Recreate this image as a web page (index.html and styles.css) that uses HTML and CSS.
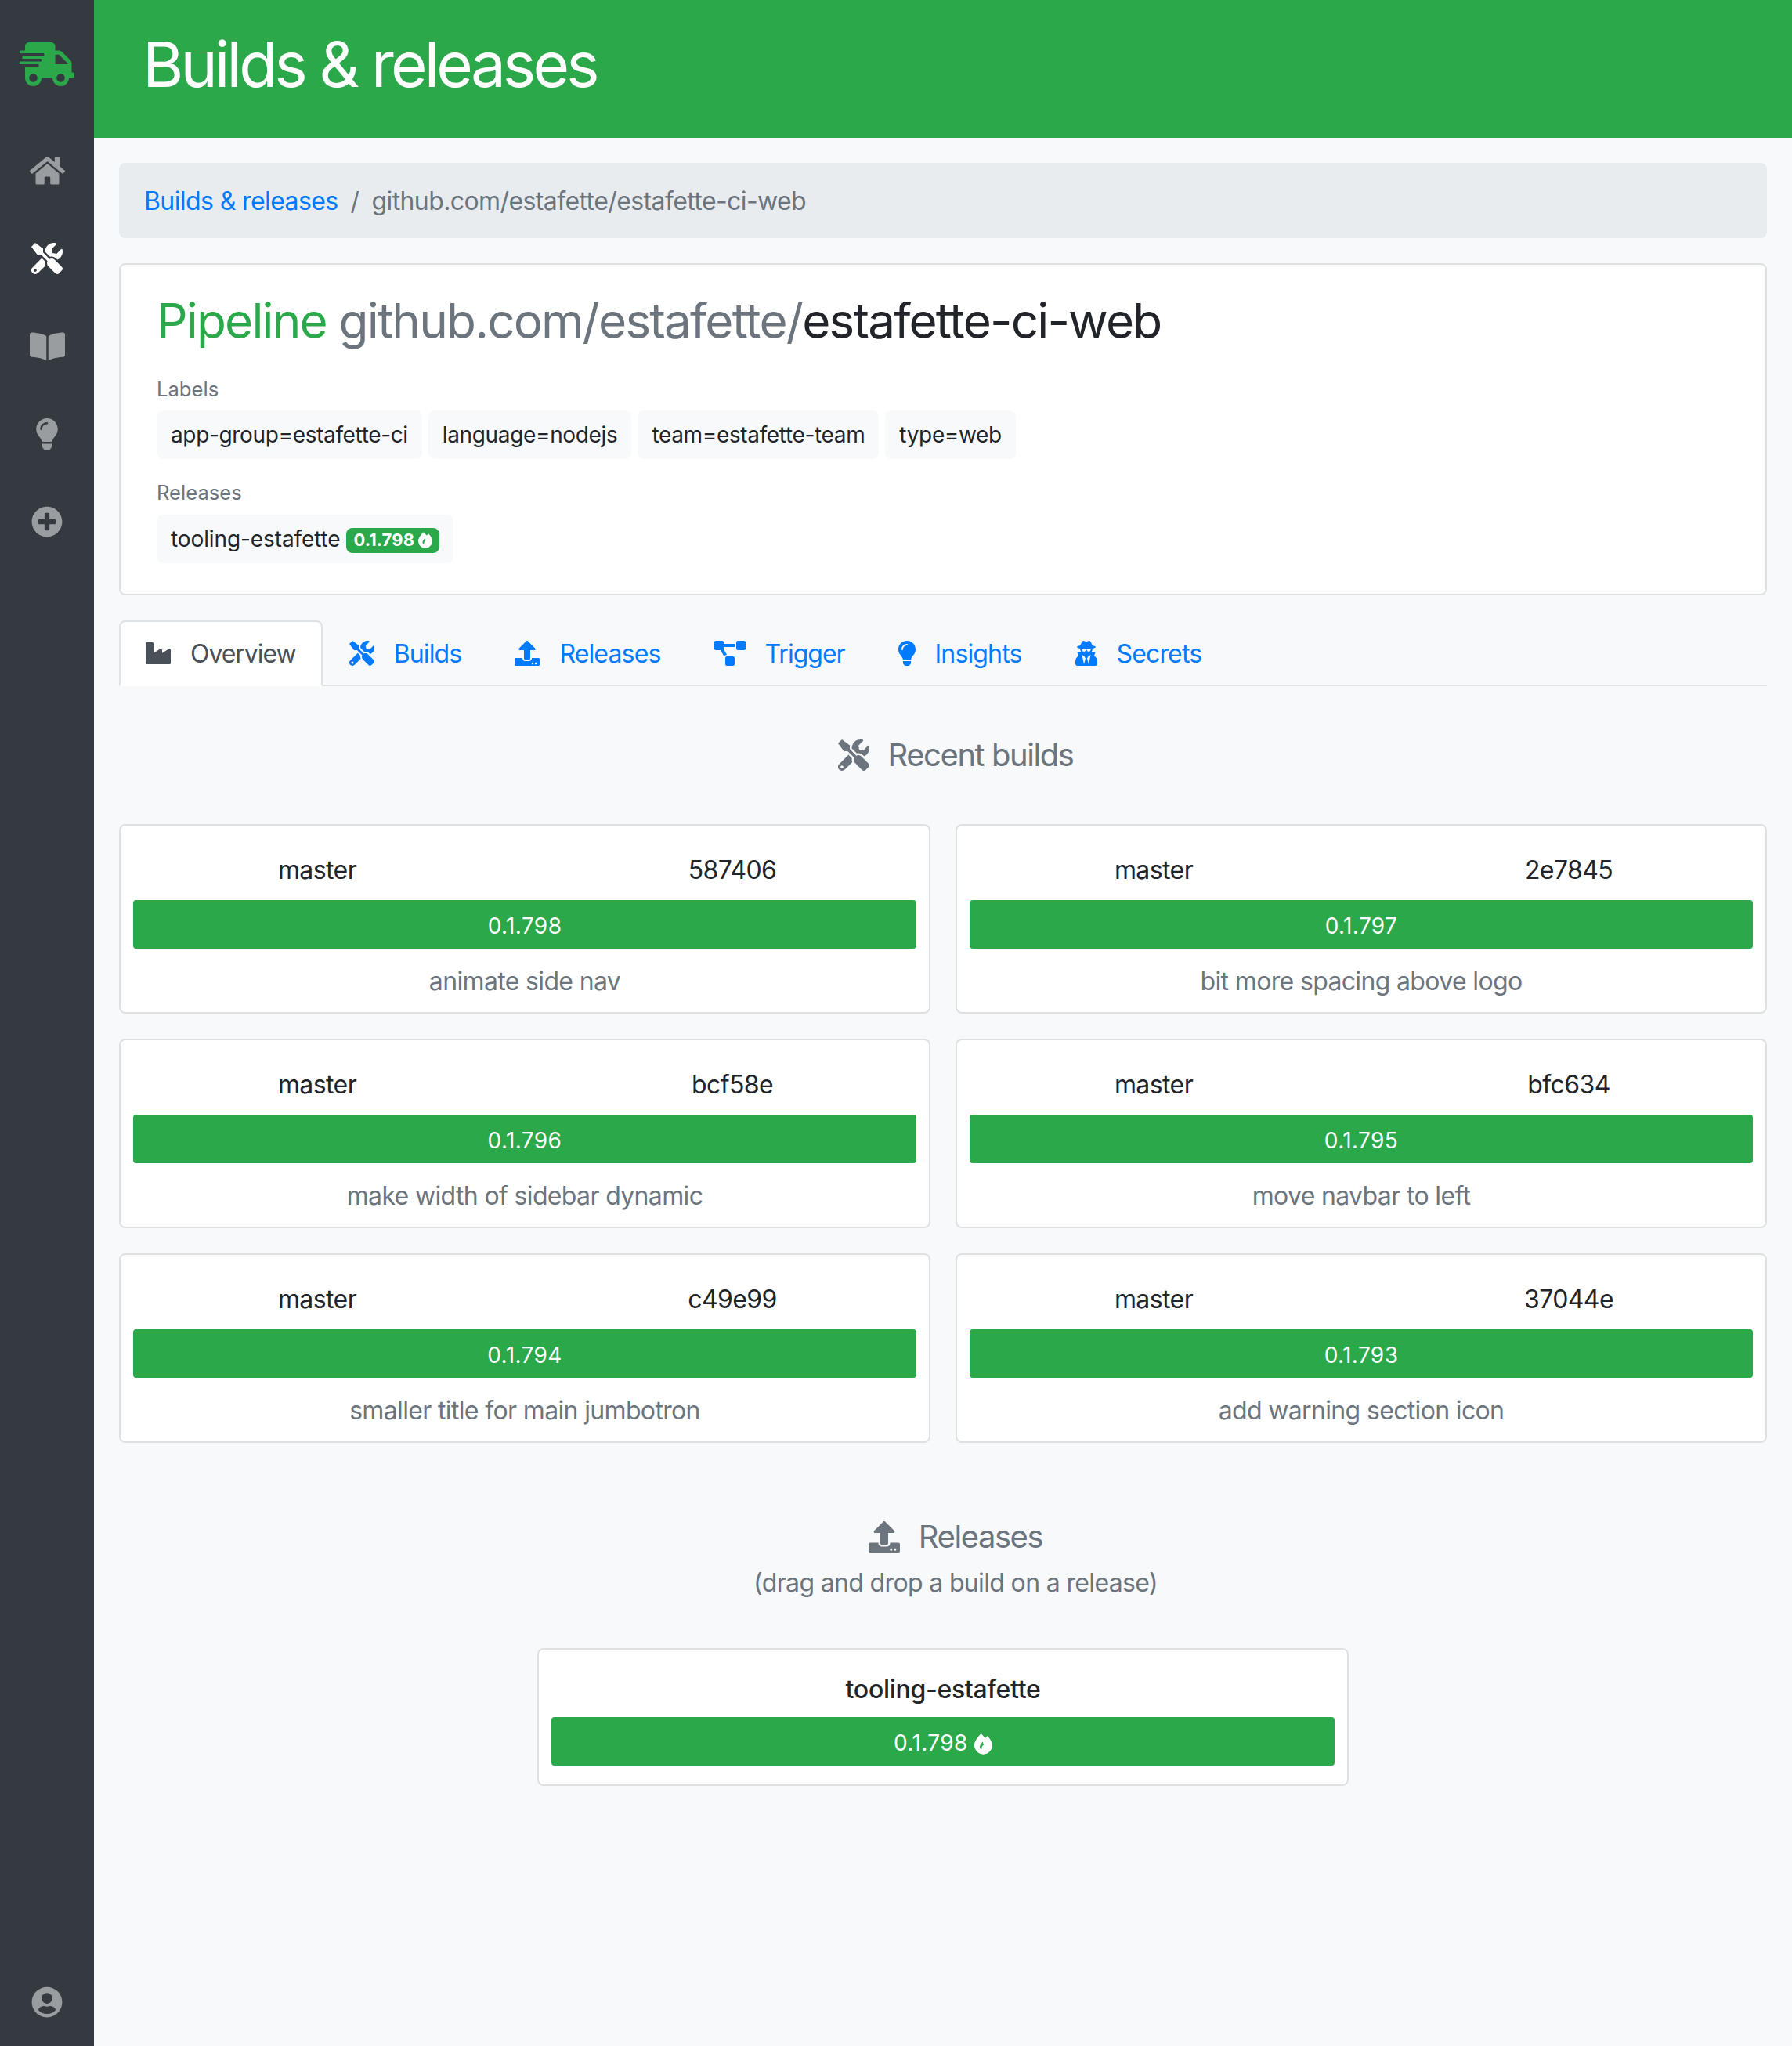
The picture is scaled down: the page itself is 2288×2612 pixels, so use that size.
FILE: index.html
```html
<!DOCTYPE html>
<html lang="en">
<head>
<meta charset="utf-8">
<title>Builds &amp; releases</title>
<link rel="stylesheet" href="styles.css">
</head>
<body>
<svg class="defs" aria-hidden="true">
  <symbol id="i-truck" viewBox="0 0 640 512"><path d="M624 352h-16V243.9c0-12.7-5.1-24.9-14.1-33.9L494 110.1c-9-9-21.2-14.1-33.9-14.1H416V48c0-26.5-21.5-48-48-48H112C85.5 0 64 21.5 64 48v48H8c-4.4 0-8 3.6-8 8v16c0 4.4 3.6 8 8 8h272c4.4 0 8 3.6 8 8v16c0 4.4-3.6 8-8 8H40c-4.4 0-8 3.6-8 8v16c0 4.4 3.6 8 8 8h208c4.4 0 8 3.6 8 8v16c0 4.4-3.6 8-8 8H8c-4.4 0-8 3.6-8 8v16c0 4.4 3.6 8 8 8h208c4.4 0 8 3.6 8 8v16c0 4.4-3.6 8-8 8H64v128c0 53 43 96 96 96s96-43 96-96h128c0 53 43 96 96 96s96-43 96-96h48c8.8 0 16-7.2 16-16v-32c0-8.8-7.2-16-16-16zM160 464c-26.5 0-48-21.5-48-48s21.5-48 48-48 48 21.5 48 48-21.5 48-48 48zm320 0c-26.5 0-48-21.5-48-48s21.5-48 48-48 48 21.5 48 48-21.5 48-48 48zm80-208H416V144h44.1l99.9 99.9V256z"/></symbol>
  <symbol id="i-home" viewBox="0 0 576 512"><path d="M280.37 148.26L96 300.11V464a16 16 0 0 0 16 16l112.06-.29a16 16 0 0 0 15.92-16V368a16 16 0 0 1 16-16h64a16 16 0 0 1 16 16v95.64a16 16 0 0 0 16 16.05L464 480a16 16 0 0 0 16-16V300L295.67 148.26a12.19 12.19 0 0 0-15.3 0zM571.6 251.47L488 182.56V44.05a12 12 0 0 0-12-12h-56a12 12 0 0 0-12 12v72.61L318.47 43a48 48 0 0 0-61 0L4.34 251.47a12 12 0 0 0-1.6 16.9l25.5 31A12 12 0 0 0 45.15 301l235.22-193.74a12.19 12.19 0 0 1 15.3 0L530.9 301a12 12 0 0 0 16.9-1.6l25.5-31a12 12 0 0 0-1.7-16.93z"/></symbol>
  <symbol id="i-tools" viewBox="0 0 512 512"><path d="M501.1 395.7L384 278.6c-23.1-23.1-57.6-27.6-85.4-13.9L192 158.1V96L64 0 0 64l96 128h62.1l106.6 106.6c-13.6 27.8-9.2 62.3 13.9 85.4l117.1 117.1c14.6 14.6 38.2 14.6 52.7 0l52.7-52.7c14.5-14.6 14.5-38.2 0-52.7zM331.7 225c28.3 0 54.9 11 74.9 31l19.4 19.4c15.8-6.9 30.8-16.5 43.8-29.5 37.1-37.1 49.7-89.3 37.9-136.7-2.2-9-13.5-12.1-20.1-5.5l-74.4 74.4-67.9-11.3L334 98.9l74.4-74.4c6.6-6.6 3.4-17.9-5.7-20.2-47.4-11.7-99.6.9-136.6 37.9-28.5 28.5-41.9 66.1-41.2 103.6l82.1 82.1c8.1-1.9 16.5-2.9 24.7-2.9zm-103.9 82l-56.7-56.7L18.7 402.8c-25 25-25 65.5 0 90.5s65.5 25 90.5 0l123.6-123.6c-7.6-19.9-9.9-41.6-5-62.7zM64 472c-13.2 0-24-10.8-24-24 0-13.3 10.7-24 24-24s24 10.7 24 24c0 13.2-10.7 24-24 24z"/></symbol>
  <symbol id="i-book" viewBox="0 0 576 512"><path d="M542.22 32.05c-54.8 3.11-163.72 14.43-230.96 55.59-4.64 2.84-7.27 7.89-7.27 13.17v363.87c0 11.55 12.63 18.85 23.28 13.49 69.18-34.82 169.23-44.32 218.7-46.92 16.89-.89 30.02-14.43 30.02-30.66V62.75c.01-17.71-15.35-31.74-33.77-30.7zM264.73 87.64C197.5 46.48 88.58 35.17 33.78 32.05 15.36 31.01 0 45.04 0 62.75V400.6c0 16.24 13.13 29.78 30.02 30.66 49.49 2.6 149.59 12.11 218.77 46.95 10.62 5.35 23.21-1.94 23.21-13.46V100.63c0-5.29-2.62-10.14-7.27-12.99z"/></symbol>
  <symbol id="i-bulb" viewBox="0 0 352 512"><path d="M96.06 454.35c.01 6.29 1.87 12.45 5.36 17.69l17.09 25.69a31.99 31.99 0 0 0 26.64 14.28h61.71a31.99 31.99 0 0 0 26.64-14.28l17.09-25.69a31.989 31.989 0 0 0 5.36-17.69l.04-38.35H96.01l.05 38.35zM0 176c0 44.37 16.45 84.85 43.56 115.78 16.52 18.85 42.36 58.23 52.21 91.45.04.26.07.52.11.78h160.24c.04-.26.07-.51.11-.78 9.85-33.22 35.69-72.6 52.21-91.45C335.55 260.85 352 220.37 352 176 352 78.61 272.91-.3 175.45 0 73.44.31 0 82.97 0 176zm176-80c-44.11 0-80 35.89-80 80 0 8.84-7.16 16-16 16s-16-7.16-16-16c0-61.76 50.24-112 112-112 8.84 0 16 7.16 16 16s-7.16 16-16 16z"/></symbol>
  <symbol id="i-plus" viewBox="0 0 512 512"><path d="M256 8C119 8 8 119 8 256s111 248 248 248 248-111 248-248S393 8 256 8zm144 276c0 6.6-5.4 12-12 12h-92v92c0 6.6-5.4 12-12 12h-56c-6.6 0-12-5.4-12-12v-92h-92c-6.6 0-12-5.4-12-12v-56c0-6.6 5.4-12 12-12h92v-92c0-6.6 5.4-12 12-12h56c6.6 0 12 5.4 12 12v92h92c6.6 0 12 5.4 12 12v56z"/></symbol>
  <symbol id="i-user" viewBox="0 0 496 512"><path d="M248 8C111 8 0 119 0 256s111 248 248 248 248-111 248-248S385 8 248 8zm0 96c48.6 0 88 39.4 88 88s-39.4 88-88 88-88-39.4-88-88 39.4-88 88-88zm0 344c-58.7 0-111.3-26.6-146.5-68.2 18.8-35.4 55.6-59.8 98.5-59.8 2.4 0 4.8.4 7.1 1.1 13 4.2 26.6 6.9 40.9 6.9 14.3 0 28-2.7 40.9-6.9 2.3-.7 4.7-1.1 7.1-1.1 42.9 0 79.7 24.4 98.5 59.8C359.3 421.4 306.7 448 248 448z"/></symbol>
  <symbol id="i-industry" viewBox="0 0 512 512"><path d="M475.115 163.781L336 252.309v-68.28c0-18.916-20.931-30.399-36.885-20.248L160 252.309V56c0-13.255-10.745-24-24-24H24C10.745 32 0 42.745 0 56v400c0 13.255 10.745 24 24 24h464c13.255 0 24-10.745 24-24V184.029c0-18.917-20.931-30.399-36.885-20.248z"/></symbol>
  <symbol id="i-upload" viewBox="0 0 512 512"><path d="M296 384h-80c-13.3 0-24-10.7-24-24V192h-87.7c-17.8 0-26.7-21.5-14.1-34.1L242.3 5.7c7.5-7.5 19.8-7.5 27.3 0l152.2 152.2c12.6 12.6 3.7 34.1-14.1 34.1H320v168c0 13.3-10.7 24-24 24zm216-8v112c0 13.3-10.7 24-24 24H24c-13.3 0-24-10.7-24-24V376c0-13.3 10.7-24 24-24h136v8c0 30.9 25.1 56 56 56h80c30.9 0 56-25.1 56-56v-8h136c13.3 0 24 10.7 24 24zm-124 88c0-11-9-20-20-20s-20 9-20 20 9 20 20 20 20-9 20-20zm64 0c0-11-9-20-20-20s-20 9-20 20 9 20 20 20 20-9 20-20z"/></symbol>
  <symbol id="i-diagram" viewBox="0 0 640 512"><path d="M384 320H256c-17.67 0-32 14.33-32 32v128c0 17.67 14.33 32 32 32h128c17.67 0 32-14.33 32-32V352c0-17.67-14.33-32-32-32zM192 32c0-17.67-14.33-32-32-32H32C14.33 0 0 14.33 0 32v128c0 17.67 14.33 32 32 32h95.72l73.16 128.04C211.98 300.98 232.4 288 256 288h.28L192 175.51V128h224V64H192V32zM608 0H480c-17.67 0-32 14.33-32 32v128c0 17.67 14.33 32 32 32h128c17.67 0 32-14.33 32-32V32c0-17.67-14.33-32-32-32z"/></symbol>
  <symbol id="i-secret" viewBox="0 0 448 512"><path d="M383.9 308.3l23.9-62.6c4-10.5-3.7-21.7-15-21.7h-58.5c11-18.9 17.8-40.6 17.8-64v-.3c39.2-7.8 64-19.1 64-31.7 0-13.3-27.3-25.1-70.1-33-9.2-32.8-27-65.8-40.6-82.8-9.5-11.9-25.9-15.6-39.5-8.8l-27.6 13.8c-9 4.5-19.6 4.5-28.6 0L182.1 3.4c-13.6-6.8-30-3.1-39.5 8.8-13.5 17-31.4 50-40.6 82.8-42.7 7.9-70 19.7-70 33 0 12.6 24.8 23.9 64 31.7v.3c0 23.4 6.8 45.1 17.8 64H56.3c-11.5 0-19.2 11.7-14.7 22.3l25.8 60.2C27.3 329.8 0 372.7 0 422.4v44.8C0 491.9 20.1 512 44.8 512h358.4c24.7 0 44.8-20.1 44.8-44.8v-44.8c0-48.4-25.8-90.4-64.1-114.1zM176 480l-41.6-192 49.6 32 24 40-32 120zm96 0l-32-120 24-40 49.6-32L272 480zm41.7-298.5c-3.9 11.9-7 24.6-16.5 33.4-10.1 9.3-48 22.4-64-25-2.8-8.4-15.4-8.4-18.3 0-17 50.2-56 32.4-64 25-9.5-8.8-12.7-21.5-16.5-33.4-.8-2.5-6.3-5.7-6.3-5.8v-10.8c28.3 3.6 61 5.8 96 5.8s67.7-2.1 96-5.8v10.8c-.1.1-5.6 3.2-6.4 5.8z"/></symbol>
  <symbol id="i-fire" viewBox="0 0 448 512"><path fill-rule="evenodd" d="M323.56 51.2c-20.8 19.3-39.58 39.59-56.22 59.97C240.08 73.62 206.28 35.53 168 0 69.74 91.17 0 209.96 0 281.6 0 408.85 100.29 512 224 512s224-103.15 224-230.4c0-53.27-51.98-163.14-124.44-230.4zM205 195C178 250 135 285 135 330C135 365 160 385 185 380C172 345 192 305 235 270C222 245 212 220 205 195z"/></symbol>
</svg>

<div class="app">
  <nav class="sidebar">
    <a class="logo" href="#"><svg class="ic-logo"><use href="#i-truck"/></svg></a>
    <a class="side-item" href="#"><svg class="ic-side-wide"><use href="#i-home"/></svg></a>
    <a class="side-item active" href="#"><svg class="ic-side"><use href="#i-tools"/></svg></a>
    <a class="side-item" href="#"><svg class="ic-side-wide"><use href="#i-book"/></svg></a>
    <a class="side-item" href="#"><svg class="ic-side-bulb"><use href="#i-bulb"/></svg></a>
    <a class="side-item" href="#"><svg class="ic-side"><use href="#i-plus"/></svg></a>
    <a class="side-item side-bottom" href="#"><svg class="ic-side"><use href="#i-user"/></svg></a>
  </nav>

  <div class="page">
    <header class="topbar"><h1 class="page-title">Builds &amp; releases</h1></header>

    <main class="content">
      <ol class="breadcrumb">
        <li><a href="#">Builds &amp; releases</a></li>
        <li class="crumb-sep">/</li>
        <li class="crumb-current">github.com/estafette/estafette-ci-web</li>
      </ol>

      <section class="pipeline-card">
        <h2 class="pipeline-title"><span class="t-green">Pipeline</span> <span class="t-gray">github.com/estafette/</span>estafette-ci-web</h2>
        <div class="field-label">Labels</div>
        <div class="chips">
          <span class="chip">app-group=estafette-ci</span>
          <span class="chip">language=nodejs</span>
          <span class="chip">team=estafette-team</span>
          <span class="chip">type=web</span>
        </div>
        <div class="field-label field-label-next">Releases</div>
        <div class="chips">
          <span class="chip chip-release">tooling-estafette <span class="badge">0.1.798 <svg class="ic-badge"><use href="#i-fire"/></svg></span></span>
        </div>
      </section>

      <ul class="tabs">
        <li><a class="tab tab-active" href="#"><svg class="ic-tab"><use href="#i-industry"/></svg><span class="tab-label">Overview</span></a></li>
        <li><a class="tab" href="#"><svg class="ic-tab"><use href="#i-tools"/></svg><span class="tab-label">Builds</span></a></li>
        <li><a class="tab" href="#"><svg class="ic-tab"><use href="#i-upload"/></svg><span class="tab-label">Releases</span></a></li>
        <li><a class="tab tab-tight" href="#"><svg class="ic-tab-wide"><use href="#i-diagram"/></svg><span class="tab-label">Trigger</span></a></li>
        <li><a class="tab" href="#"><svg class="ic-tab-bulb"><use href="#i-bulb"/></svg><span class="tab-label">Insights</span></a></li>
        <li><a class="tab" href="#"><svg class="ic-tab-secret"><use href="#i-secret"/></svg><span class="tab-label">Secrets</span></a></li>
      </ul>

      <h3 class="section-title section-builds"><svg class="ic-section"><use href="#i-tools"/></svg>Recent builds</h3>

      <div class="build-grid">
        <article class="build-card">
          <div class="build-meta"><span>master</span><span>587406</span></div>
          <div class="bar">0.1.798</div>
          <div class="build-msg">animate side nav</div>
        </article>
        <article class="build-card">
          <div class="build-meta"><span>master</span><span>2e7845</span></div>
          <div class="bar">0.1.797</div>
          <div class="build-msg">bit more spacing above logo</div>
        </article>
        <article class="build-card">
          <div class="build-meta"><span>master</span><span>bcf58e</span></div>
          <div class="bar">0.1.796</div>
          <div class="build-msg">make width of sidebar dynamic</div>
        </article>
        <article class="build-card">
          <div class="build-meta"><span>master</span><span>bfc634</span></div>
          <div class="bar">0.1.795</div>
          <div class="build-msg">move navbar to left</div>
        </article>
        <article class="build-card">
          <div class="build-meta"><span>master</span><span>c49e99</span></div>
          <div class="bar">0.1.794</div>
          <div class="build-msg">smaller title for main jumbotron</div>
        </article>
        <article class="build-card">
          <div class="build-meta"><span>master</span><span>37044e</span></div>
          <div class="bar">0.1.793</div>
          <div class="build-msg">add warning section icon</div>
        </article>
      </div>

      <h3 class="section-title section-releases"><svg class="ic-section"><use href="#i-upload"/></svg>Releases</h3>
      <p class="section-sub">(drag and drop a build on a release)</p>

      <article class="release-card">
        <div class="release-name">tooling-estafette</div>
        <div class="bar">0.1.798 <svg class="ic-bar"><use href="#i-fire"/></svg></div>
      </article>
    </main>
  </div>
</div>
</body>
</html>
```
FILE: styles.css
```css
* { box-sizing: border-box; }
html, body { margin: 0; padding: 0; }
body {
  font-family: Inter, "Liberation Sans", sans-serif;
  font-size: 32px;
  line-height: 48px;
  letter-spacing: -0.6px;
  color: #212529;
  background: #f8f9fa;
}
a { text-decoration: none; color: #007bff; }
svg { fill: currentColor; display: inline-block; flex: none; }
.defs { display: none; }

.app { display: flex; min-height: 100vh; }

.sidebar {
  width: 120px;
  flex: none;
  background: #343a40;
  display: flex;
  flex-direction: column;
  align-items: stretch;
}
.logo { height: 162px; display: flex; align-items: center; justify-content: center; color: #2ba84a; padding-top: 2px; }
.ic-logo { width: 70px; height: 56px; }
.side-item { height: 112px; display: flex; align-items: center; justify-content: center; color: rgba(255, 255, 255, .5); }
.side-item.active { color: #fff; }
.side-bottom { margin-top: auto; }
.ic-side { width: 40px; height: 40px; }
.ic-side-wide { width: 45px; height: 40px; }
.ic-side-bulb { width: 28px; height: 40px; }

.page { flex: 1; min-width: 0; display: flex; flex-direction: column; }
.topbar { height: 176px; background: #2ba84a; color: #fff; display: flex; align-items: center; padding: 0 62px 12px; }
.page-title { margin: 0; font-size: 80px; font-weight: 400; line-height: 96px; letter-spacing: -3.8px; }

.content { padding: 32px; flex: 1; }

.breadcrumb {
  list-style: none;
  margin: 0 0 32px;
  padding: 25px 32px 23px;
  background: #e9ecef;
  border-radius: 8px;
  display: flex;
  color: #6c757d;
}
.crumb-sep { padding: 0 16px; }

.pipeline-card {
  background: #fff;
  border: 2px solid #dfe0e1;
  border-radius: 8px;
  padding: 30px 46px 40px;
  height: 424px;
  margin-bottom: 32px;
}
.pipeline-title { margin: 0 0 26px; font-size: 62px; font-weight: 400; line-height: 84px; letter-spacing: -1.83px; }
.t-green { color: #2ba84a; }
.t-gray { color: #6c757d; }
.field-label { font-size: 25.6px; line-height: 38px; color: #6c757d; margin-bottom: 8px; letter-spacing: 0; }
.field-label-next { margin-top: 24px; margin-bottom: 9px; }
.chips { display: flex; gap: 8px; }
.chip {
  display: inline-block;
  background: #f8f9fa;
  border-radius: 8px;
  font-size: 28px;
  line-height: 42px;
  padding: 10px 18px;
  white-space: pre;
  letter-spacing: -0.35px;
}
.chip-release { letter-spacing: -0.1px; }
.badge {
  display: inline-block;
  background: #2ba84a;
  color: #fff;
  font-size: 22px;
  line-height: 21px;
  font-weight: 700;
  padding: 5.5px 9px;
  border-radius: 8px;
  vertical-align: 1px;
  letter-spacing: 0.1px;
}
.ic-badge { width: 18px; height: 21px; vertical-align: -3px; }

.tabs {
  list-style: none;
  margin: 0;
  padding: 0;
  display: flex;
  border-bottom: 2px solid #dee2e6;
}
.tab {
  display: flex;
  align-items: center;
  padding: 16px 32px;
  border: 2px solid transparent;
  border-radius: 8px 8px 0 0;
  margin-bottom: -2px;
  gap: 25px;
  letter-spacing: -0.85px;
}
.tab-label { position: relative; top: 1px; }
.tab-active { background: #fff; color: #495057; border-color: #dee2e6 #dee2e6 #fff; letter-spacing: -1.05px; }
.tab-tight { letter-spacing: -1px; }
.ic-tab { width: 32px; height: 32px; }
.ic-tab-wide { width: 40px; height: 32px; }
.ic-tab-bulb { width: 22px; height: 32px; }
.ic-tab-secret { width: 28px; height: 32px; }

.section-title {
  margin: 0;
  font-size: 40px;
  font-weight: 400;
  line-height: 48px;
  letter-spacing: -1.45px;
  color: #6c757d;
  display: flex;
  align-items: center;
  justify-content: center;
  gap: 24px;
  padding-left: 32px;
}
.section-builds { margin-top: 64px; margin-bottom: 64px; }
.section-releases { margin-top: 96px; }
.ic-section { width: 40px; height: 40px; }
.section-sub { margin: 11px 0 59px; padding-left: 32px; text-align: center; color: #6c757d; letter-spacing: -0.65px; }

.build-grid { display: grid; grid-template-columns: 1fr 1fr; gap: 32px; }
.build-card, .release-card {
  background: #fff;
  border: 2px solid #dfe0e1;
  border-radius: 8px;
  padding: 0 16px;
  height: 242px;
  text-align: center;
}
.build-meta { display: grid; grid-template-columns: 47% 6% 47%; padding-top: 33px; }
.build-meta span:last-child { grid-column: 3; }
.bar {
  background: #2ba84a;
  color: #fff;
  font-size: 28px;
  line-height: 42px;
  letter-spacing: 0.4px;
  padding: 12px 0 8px;
  border-radius: 4px;
  margin: 14px 0 18px;
}
.build-msg { color: #6c757d; letter-spacing: -0.65px; }
.ic-bar { width: 23px; height: 27px; vertical-align: -5px; }

.release-card { width: 1036px; margin: 0 auto; height: 176px; padding: 16px; }
.release-name { font-weight: 500; line-height: 70px; letter-spacing: -0.3px; }
.release-card .bar { margin: 0; }
```
